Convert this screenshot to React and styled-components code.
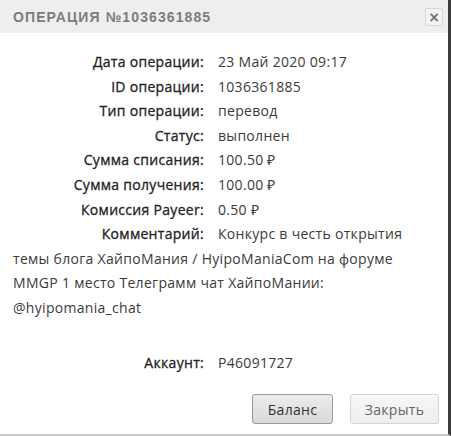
import React from 'react';
import styled, { createGlobalStyle } from 'styled-components';

const Global = createGlobalStyle`
  html, body { margin: 0; padding: 0; background: #fff; }
  * { box-sizing: border-box; }
`;

const Modal = styled.div`
  width: 451px;
  height: 436px;
  display: flex;
  flex-direction: column;
  border-right: 3px solid #3c3c3c;
  border-bottom: 2px solid #c8c8c8;
  font-family: "Open Sans", "Liberation Sans", sans-serif;
  color: #333;
`;

const Header = styled.div`
  height: 33px;
  background: #eeeeee;
  display: flex;
  align-items: center;
  justify-content: space-between;
  padding: 0 5px 0 13px;
`;

const Title = styled.div`
  font-family: "Liberation Sans", sans-serif;
  font-size: 14px;
  font-weight: 700;
  letter-spacing: 1.1px;
  color: #7c7c7c;
`;

const Close = styled.button`
  width: 18px;
  height: 18px;
  padding: 0;
  border: 1px solid #d6d6d6;
  border-radius: 2px;
  background: #f3f3f3;
  color: #707070;
  font-size: 14px;
  font-weight: 700;
  line-height: 16px;
  font-family: "DejaVu Sans", sans-serif;
  display: flex;
  align-items: center;
  justify-content: center;
`;

const Body = styled.div`
  flex: 1;
  padding: 17px 13px 0 13px;
  font-size: 14px;
  letter-spacing: 0.3px;
  line-height: 24.6px;
`;

const Line = styled.div`
  color: #3a3a3a;
  margin-top: ${p => (p.gap ? '30px' : '0')};
  white-space: nowrap;
`;

const Label = styled.span`
  display: inline-block;
  width: 191px;
  margin-right: 14px;
  text-align: right;
  color: #222;
  -webkit-text-stroke: 0.3px #222;
`;

const Footer = styled.div`
  display: flex;
  justify-content: flex-end;
  gap: 17px;
  padding: 0 9px 10px 0;
`;

const Button = styled.button`
  height: 30px;
  width: ${p => p.w}px;
  border-radius: 3px;
  font-family: "Open Sans", "Liberation Sans", sans-serif;
  font-size: 14px;
  letter-spacing: 0.3px;
  border: 1px solid ${p => (p.primary ? '#9a9a9a' : '#d4d4d4')};
  color: ${p => (p.primary ? '#333' : '#666')};
  background: ${p =>
    p.primary
      ? 'linear-gradient(#ececec, #d9d9d9)'
      : 'linear-gradient(#f7f7f7, #eeeeee)'};
`;

const rows = [
  ['Дата операции:', '23 Май 2020 09:17'],
  ['ID операции:', '1036361885'],
  ['Тип операции:', 'перевод'],
  ['Статус:', 'выполнен'],
  ['Сумма списания:', '100.50 ₽'],
  ['Сумма получения:', '100.00 ₽'],
  ['Комиссия Payeer:', '0.50 ₽'],
];

export default function App() {
  return (
    <>
      <Global />
      <Modal>
        <Header>
          <Title>ОПЕРАЦИЯ №1036361885</Title>
          <Close>×</Close>
        </Header>
        <Body>
          {rows.map(([k, v]) => (
            <Line key={k}>
              <Label>{k}</Label>
              {v}
            </Line>
          ))}
          <Line>
            <Label>Комментарий:</Label>
            Конкурс в честь открытия
          </Line>
          <Line>темы блога ХайпоМания / HyipoManiaCom на форуме</Line>
          <Line>MMGP 1 место Телеграмм чат ХайпоМании:</Line>
          <Line>@hyipomania_chat</Line>
          <Line gap>
            <Label>Аккаунт:</Label>
            P46091727
          </Line>
        </Body>
        <Footer>
          <Button primary w={81}>Баланс</Button>
          <Button w={89}>Закрыть</Button>
        </Footer>
      </Modal>
    </>
  );
}
